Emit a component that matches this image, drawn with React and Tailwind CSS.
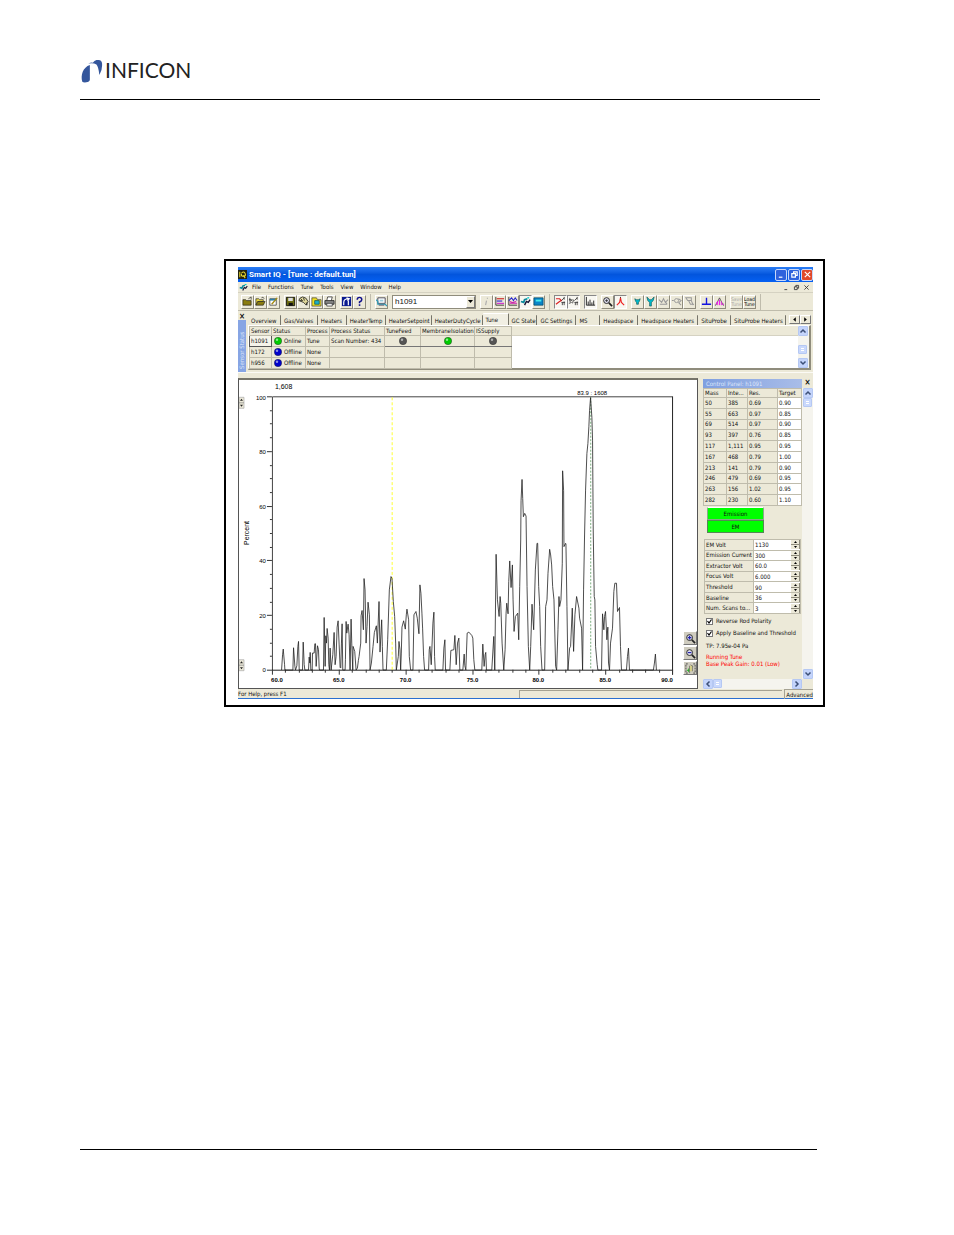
import React from "react";

const trace =
  "155,391 158,345 160,328 164,375 165,391 189,391 191,324 195,380 197,391 201,378 204,320 206,305 208,391 218,391 220,307 223,374 225,391 236,391 238,352 240,370 241,338 243,391 247,391 248,340 253,340 255,312 257,312 259,380 263,318 266,330 268,385 269,391 281,391 283,233 286,380 288,288 290,310 292,266 295,295 297,375 299,391 301,325 304,391 309,345 313,278 316,375 319,350 322,262 325,243 328,313 331,383 333,385 335,310 337,252 339,391 346,391 347,360 349,245 351,280 355,253 358,285 361,391 364,238 366,310 369,391 370,320 375,335 379,391 383,385 386,362 388,350 393,310 394,228 397,212 401,270 403,116 406,150 409,310 412,260 415,187 419,225 421,391 425,370 430,320 434,278 440,258 443,310 448,185 451,337 456,240 458,320 460,391 470,391 474,300 479,150 484,110 487,116 491,185 495,230 498,310 500,391 506,350 508,305 511,330 513,391 515,340 517,262 522,243 527,268 530,225 532,208 537,240 539,350 543,391 550,391 553,225 559,215 563,235 568,282 571,135 574,160 577,220 579,265 582,350 585,391 597,391 599,330 601,320 605,375 610,250 613,217 615,350 617,391 640,391 643,325 646,300 648,391 661,391 664,332 673,330 676,287 680,375 684,310 688,295 691,391 700,391 704,343 706,378 709,391 713,280 718,277 727,287 730,295 733,360 736,391 757,391 760,313 764,380 767,345 769,338 771,391 787,391 793,290 796,391 800,43 804,180 809,230 812,170 814,190 818,310 823,391 827,330 830,220 832,190 836,222 838,125 841,63 845,143 849,75 851,180 854,275 858,230 865,220 868,300 871,140 874,0 875,-118 878,-182 880,-125 882,-70 886,-80 890,-72 893,140 897,320 901,391 904,320 908,193 913,270 918,90 923,10 925,10 928,140 931,200 934,320 938,391 946,391 949,200 953,180 956,100 961,28 964,45 967,75 970,140 974,180 979,380 982,391 986,270 989,170 991,200 995,180 999,70 1000,-208 1003,-148 1004,20 1009,10 1010,12 1013,200 1016,391 1021,325 1024,320 1029,205 1033,335 1037,225 1042,170 1049,205 1051,235 1057,265 1060,391 1063,150 1066,-15 1069,-150 1073,-260 1076,-290 1079,-342 1081,-390 1084,-428 1088,-368 1090,-300 1092,-30 1095,170 1097,180 1099,320 1104,375 1106,391 1117,391 1120,222 1124,270 1126,230 1129,215 1133,300 1136,262 1138,370 1141,391 1144,310 1150,265 1154,155 1157,130 1162,130 1165,215 1171,203 1174,320 1177,391 1192,391 1195,350 1198,325 1201,391 1273,391 1276,370 1279,343 1282,391";

const sensors = [
  ["h1091", "Online", "#0c0", "Tune", "Scan Number: 434"],
  ["h172", "Offline", "#00c", "None", ""],
  ["h956", "Offline", "#00c", "None", ""],
];
const tabs = ["Overview", "Gas/Valves", "Heaters", "HeaterTemp", "HeaterSetpoint", "HeaterDutyCycle", "Tune", "GC State", "GC Settings", "MS", "Headspace", "Headspace Heaters", "SituProbe", "SituProbe Heaters"];
const masses = [
  ["50", "385", "0.69", "0.90"],
  ["55", "663", "0.97", "0.85"],
  ["69", "514", "0.97", "0.90"],
  ["93", "397", "0.76", "0.85"],
  ["117", "1,111", "0.95", "0.95"],
  ["167", "468", "0.79", "1.00"],
  ["213", "141", "0.79", "0.90"],
  ["246", "479", "0.69", "0.95"],
  ["263", "156", "1.02", "0.95"],
  ["282", "230", "0.60", "1.10"],
];
const params = [
  ["EM Volt", "1130"],
  ["Emission Current", "300"],
  ["Extractor Volt", "60.0"],
  ["Focus Volt", "6.000"],
  ["Threshold", "90"],
  ["Baseline", "36"],
  ["Num. Scans to...", "3"],
];

/* Toolbar glyphs on a 12 x 12 grid */
const magnifier = (
  <>
    <circle cx="5" cy="5" r="3.2" fill="#dde" stroke="#222" />
    <path d="M7.5 7.5L11 11" stroke="#222" strokeWidth="1.8" />
  </>
);
const glyphs = {
  folder: <><path d="M1 4h3l1 1h5v5H1z" fill="#8a7c10" stroke="#222" strokeWidth=".7" /><path d="M7 3l3-2v3" fill="none" stroke="#333" strokeWidth=".8" /></>,
  open: <><path d="M1 3h3l1 1h4v2H3L1 10z" fill="#e8d840" stroke="#222" strokeWidth=".7" /><path d="M1 10l2-4h8l-2 4z" fill="#8a7c10" stroke="#222" strokeWidth=".7" /><path d="M7 2q2-2 3 1" fill="none" stroke="#222" strokeWidth=".7" /></>,
  edit: <><path d="M2 3h7v7H2z" fill="#fff" stroke="#333" strokeWidth=".8" /><path d="M2 3h7v2H2z" fill="#2a7fa8" /><path d="M4 9l6-7" stroke="#a58a10" strokeWidth="1.5" /></>,
  save: <><path d="M1.5 1.5h9v9h-9z" fill="#6b6b10" stroke="#111" /><path d="M3.5 2h5v3.5h-5z" fill="#ddd" /><path d="M4 7.5h4.5v3H4z" fill="#111" /></>,
  saveAs: <><path d="M1 5q0-3 4-4 4 0 6 5l-2 4-3-3z" fill="#e0d89a" stroke="#222" strokeWidth=".9" /><path d="M3 3l2 2M6 2l1 3M9 7l1 3M2 5h3" stroke="#222" strokeWidth=".9" /></>,
  picture: <><path d="M1 2h5l1 2h4v7H1z" fill="#f0e020" stroke="#333" strokeWidth=".7" /><path d="M4 5h5v4H4z" fill="#1bb0c8" stroke="#045" strokeWidth=".7" /></>,
  print: <><path d="M3 5l1-4h5L8 5" fill="#fff" stroke="#222" strokeWidth=".8" /><path d="M1 5h10v4H1z" fill="#888" stroke="#111" strokeWidth=".8" /><path d="M3 8h6v3H3z" fill="#eee" stroke="#222" strokeWidth=".7" /></>,
  connect: <><path d="M1 1h10v10H1z" fill="#0a1a90" /><path d="M3 10V7M3 7q0-4 5-4M6 2l3 1-2 2M8 5v5" fill="none" stroke="#fff" strokeWidth="1.300" /></>,
  help: <><path d="M3.5 4q0-2.5 2.5-2.5T8.500 4Q8.500 5.500 6 6.500V8" fill="none" stroke="#10108c" strokeWidth="1.6" /><path d="M5.200 9h1.700v1.800H5.200z" fill="#10108c" /></>,
  device: <><path d="M2 2h8v6H2z" fill="#fff" stroke="#334" strokeWidth=".9" /><path d="M4 4h4v2H4z" fill="#9cd" /><path d="M0 4l2 2v3h8l2 2" fill="none" stroke="#2a9ab8" strokeWidth="1.300" /><path d="M3 10h6" stroke="#335" strokeWidth=".8" /></>,
  info: <path d="M7 2v1M6 5L5 10" stroke="#aaa" strokeWidth="1.2" />,
  plotBars: <><path d="M2 1v9h9" fill="none" stroke="#222" strokeWidth=".9" /><path d="M3 3h8" stroke="#c22" strokeWidth="1.2" /><path d="M3 5.500h6" stroke="#22c" strokeWidth="1.2" /><path d="M3 8h8" stroke="#c2c" strokeWidth="1.2" /></>,
  plotLines: <><path d="M2 1v9h9" fill="none" stroke="#222" strokeWidth=".9" /><path d="M2 5l3-3 2 3 2-3 2 3" fill="none" stroke="#22c" strokeWidth="1.1" /><path d="M3 8h8M3 6l3 1 4-1" fill="none" stroke="#c2a" strokeWidth="1.1" /></>,
  probe: <><path d="M1 6l3 1 1-3 3-1" fill="none" stroke="#0a8a9c" strokeWidth="2" /><path d="M5 10l2-4 2 1 2-3" fill="none" stroke="#113" strokeWidth="1.500" /><path d="M8 2h2" stroke="#0cc" strokeWidth="1.500" /></>,
  screen: <><path d="M1 2h10v8H1z" fill="#0a86c8" stroke="#046" strokeWidth=".8" /><path d="M3 4h6v2H3z" fill="#4ee" /></>,
  traceRed: <><path d="M1 3h4l2 2-2 1-4 3" fill="none" stroke="#d22" strokeWidth="1.3" /><path d="M7 5l3-3M10 1v3M7 7h4M8 7v3M10 6v4" stroke="#333" strokeWidth=".9" /></>,
  traceBlack: <><path d="M1 4h3M2 2v4l3-2M1 8l3-1M7 5l3-3M10 1v3M7 7h4M8 7v3M10 6v4M5 8l1-4" fill="none" stroke="#333" strokeWidth=".9" /></>,
  spectrum: <path d="M1.500 1v9H11M3.500 10V6M5.500 10V4M7.500 10V7M9.500 10V5" fill="none" stroke="#222" strokeWidth="1" />,
  zoomPlus: <>{magnifier}<path d="M3.500 5h3M5 3.500v3" stroke="#222" strokeWidth=".8" /></>,
  peak: <><path d="M6 1v4" stroke="#222" /><path d="M2 10l3-3 1-5 1 5 3 3" fill="none" stroke="#e22" strokeWidth="1.2" /></>,
  filterSmall: <path d="M3 3l2 1h2l2-1-1 3-1 1v2H5V7L4 6z" fill="#0bc" stroke="#044" strokeWidth=".6" />,
  filterBig: <path d="M2 1l1 4 2 2v4h2V7l2-2 1-4-3 3H5z" fill="#0bc" stroke="#044" strokeWidth=".6" />,
  grayA: <path d="M1 4l3 3 2-4 2 4 3-3M2 9h8M7 5l3 4" fill="none" stroke="#999" strokeWidth="1.100" />,
  grayB: <><circle cx="6" cy="5" r="2.200" fill="none" stroke="#999" /><path d="M1 5h2M8 7l3 3M8 3l3 2-2 2" fill="none" stroke="#999" strokeWidth="1.1" /></>,
  grayC: <path d="M2 2h6v3H4zM5 5l2 4h4M8 5l2 5" fill="none" stroke="#999" strokeWidth="1.1" />,
  base: <path d="M1 9h10M6 9V2" stroke="#1414e0" strokeWidth="1.500" />,
  peaks: <><path d="M1 10h1l4-8 4 8h1" fill="none" stroke="#222" strokeWidth=".7" /><path d="M2 9l2-3v4M6 4v6M8 6v4M10 8v2" fill="none" stroke="#e1e" strokeWidth="1" /></>,
};

function Tool({ name, down }) {
  return (
    <button
      type="button"
      aria-label={name}
      className={
        "flex h-[14px] w-[13px] shrink-0 items-center justify-center border " +
        (down ? "border-t-[#888] border-l-[#888] border-r-white border-b-white bg-[#f8f7f1]" : "border-t-white border-l-white border-r-[#8f8c7c] border-b-[#8f8c7c]")
      }
    >
      <svg viewBox="0 0 12 12" className="size-[11px] shrink-0">{glyphs[name]}</svg>
    </button>
  );
}

function TextTool({ a, b, dim }) {
  return (
    <button type="button" className={"flex h-[14px] w-[13px] shrink-0 flex-col items-center justify-center border border-t-white border-l-white border-r-[#8f8c7c] border-b-[#8f8c7c] text-[5px] leading-[5px] " + (dim ? "text-[#aaa]" : "text-black")}>
      <span>{a}</span>
      <span>{b}</span>
    </button>
  );
}

const Group = ({ children }) => <div className="flex shrink-0">{children}</div>;

function ScrollButton({ d, label }) {
  return (
    <button type="button" aria-label={label} className="flex size-[10px] shrink-0 items-center justify-center rounded-[1px] border border-[#b5c8f3] bg-[#c4d4fb]">
      <svg viewBox="0 0 8 8" className="size-[8px] shrink-0"><path d={d} fill="none" stroke="#3c4f77" strokeWidth="1.500" /></svg>
    </button>
  );
}
const UP = "M1.500 5.500L4 3l2.500 2.500";
const DOWN = "M1.500 2.500L4 5l2.500-2.500";
const LEFT = "M5.500 1.500L3 4l2.500 2.500";
const RIGHT = "M2.500 1.500L5 4l-2.500 2.500";
const Thumb = () => <div className="size-[9px] shrink-0 rounded-[1px] border border-[#b5c8f3] bg-[#c9d8fc] p-[2px]"><div className="h-full border-y border-white" /></div>;

const Led = ({ c, className = "" }) => (
  <svg viewBox="0 0 8 8" className={"inline-block size-[8px] shrink-0 " + className}>
    <circle cx="4" cy="4" r="3.700" fill={c} stroke="#222" strokeWidth=".4" />
    <circle cx="3" cy="2.700" r="1.200" fill="#fff" opacity=".55" />
  </svg>
);

function SensorDock() {
  return (
    <section className="flex h-[62px] border-b border-[#fbfaf5] pt-[2px]">
      <div className="flex w-[8px] shrink-0 flex-col items-center">
        <button type="button" aria-label="Close sensor status" className="h-[7px] text-[8px] leading-[6px] font-bold">×</button>
        <div className="flex w-[8px] flex-1 rotate-180 items-center justify-start bg-[#87a5e4] pt-[3px] text-[6px] leading-[8px] whitespace-nowrap text-[#dce6fa] [writing-mode:vertical-rl]">Sensor Status</div>
      </div>
      <div className="mr-[2px] ml-[2px] flex min-w-0 flex-1 flex-col pb-[2px]">
        <div className="flex h-[12px]">
          <div role="tablist" className="grid min-w-0 flex-1 grid-cols-[33fr_37fr_29fr_39fr_46fr_51fr_26fr_29fr_39fr_24fr_38fr_60fr_33fr_55fr] items-end">
            {tabs.map((t) => (
              <button
                key={t}
                type="button"
                role="tab"
                aria-selected={t === "Tune"}
                className={
                  "min-w-0 rounded-t-[1px] border-r border-[#77756a] pl-[3px] text-left leading-[9px] whitespace-nowrap " +
                  (t === "Tune" ? "h-[12px] border-t border-t-white bg-[#f1efe3]" : "h-[10px]")
                }
              >
                {t}
              </button>
            ))}
          </div>
          <div className="flex w-[25px] shrink-0 items-center justify-end">
            {["M5.500 1.500v5L2.500 4z", "M2.500 1.500v5L5.500 4z"].map((d, i) => (
              <button key={d} type="button" aria-label={i ? "Next tabs" : "Previous tabs"} className="flex h-[9px] w-[11px] items-center justify-center border border-t-white border-l-white border-r-[#777] border-b-[#777]">
                <svg viewBox="0 0 8 8" className="size-[7px]"><path d={d} /></svg>
              </button>
            ))}
          </div>
        </div>
        <div className="flex min-h-0 flex-1 border-t border-r-2 border-b-2 border-l border-t-white border-r-[#8f8c7c] border-b-[#8f8c7c] border-l-white">
          <div className="flex min-w-0 flex-1 bg-white">
            <table className="h-[43px] w-[262px] shrink-0 table-fixed border-collapse bg-[#ece9d8] leading-[8px] whitespace-nowrap">
              <colgroup>
                <col className="w-[22px]" /><col className="w-[34px]" /><col className="w-[24px]" /><col className="w-[55px]" /><col className="w-[36px]" /><col className="w-[54px]" /><col className="w-[37px]" />
              </colgroup>
              <thead>
                <tr>
                  {["Sensor", "Status", "Process", "Process Status", "TuneFeed", "MembraneIsolation", "ISSupply"].map((h) => (
                    <th key={h} className="border border-[#bfbcac] p-0 pl-px text-left font-normal">{h}</th>
                  ))}
                </tr>
              </thead>
              <tbody>
                {sensors.map(([name, st, c, proc, ps], i) => (
                  <tr key={name}>
                    <td className={"border p-0 pl-px " + (i ? "border-[#bfbcac]" : "border-[#555] bg-[#f6f4ea]")}>{name}</td>
                    <td className="border border-[#bfbcac] p-0 pl-[2px]"><span className="flex items-center gap-[2px]"><Led c={c} />{st}</span></td>
                    <td className="border border-[#bfbcac] p-0 pl-px">{proc}</td>
                    <td className="border border-[#bfbcac] p-0 pl-px">{ps}</td>
                    {["#555", "#0c0", "#555"].map((k, j) => (
                      <td key={j} className={"border border-[#bfbcac] p-0 text-center " + (i ? "" : "border-b-[#777]")}>{i === 0 && <Led c={k} className="align-top" />}</td>
                    ))}
                  </tr>
                ))}
              </tbody>
            </table>
            <div className="h-[10px] flex-1 border-b border-[#d5d2c2] bg-[#ece9d8]" />
          </div>
          <div className="flex w-[11px] shrink-0 flex-col bg-[#f5f4ee]">
            <ScrollButton d={UP} label="Scroll up" />
            <div className="flex-1" />
            <Thumb />
            <div className="h-[4px]" />
            <ScrollButton d={DOWN} label="Scroll down" />
          </div>
        </div>
      </div>
    </section>
  );
}

function Chart() {
  const xt = Array.from({ length: 31 }, (_, i) => i);
  const yt = Array.from({ length: 21 }, (_, i) => i);
  return (
    <div className="relative min-w-0 flex-1 border-t-2 border-r border-b border-l border-[#555] border-t-[#77756a] bg-white">
      <svg viewBox="0 0 459 308" className="block h-full w-full" fontFamily="Liberation Sans, Arial, sans-serif" fontSize="6">
        <path d="M33.500 290.500V16.500H434" fill="none" stroke="#444" />
        <path d="M434.500 16V295M33 290.500H435" fill="none" stroke="#222" />
        {xt.map((i) => (
          <path key={i} d={`M${33.5 + Math.round(i * 13.37)} 290v${i % 5 ? 3 : 5}`} stroke="#333" />
        ))}
        {yt.map((i) => (
          <path key={i} d={`M33 ${16.5 + Math.round(i * 13.7)}h${i % 4 ? -2 : -5}`} stroke="#333" />
        ))}
        {["100", "80", "60", "40", "20", "0"].map((t, i) => (
          <text key={t} x="27" y={20 + Math.round(i * 54.4)} textAnchor="end">{t}</text>
        ))}
        {[["60.0", 38], ["65.0", 100], ["70.0", 167], ["75.0", 234], ["80.0", 300], ["85.0", 367], ["90.0", 429]].map(([t, x]) => (
          <text key={t} x={x} y="302" textAnchor="middle" fontWeight="bold">{t}</text>
        ))}
        <path d="M153.500 17V290" stroke="#ff3" strokeDasharray="3 2" />
        <path d="M352.500 17V290" stroke="#5b9a5f" strokeDasharray="2 1.500" strokeWidth=".8" />
        <polyline points={trace} transform="translate(-9 160) scale(.33333)" fill="none" stroke="#222" strokeWidth="2.400" />
        <text x="36" y="9" fontSize="7">1,608</text>
        <text x="339" y="15">83.9 : 1608</text>
        <text transform="translate(10 165) rotate(-90)" fontSize="7">Percent</text>
        {[17, 280].map((y) => (
          <g key={y}>
            <path d={`M0 ${y}h5v11h-5z`} fill="#ece9d8" stroke="#aaa" strokeWidth=".700" />
            <path d={`M0 ${y + 5.5}h5`} stroke="#888" strokeWidth=".700" />
            <path d={`M1 ${y + 3.5}h3l-1.500-2zM1 ${y + 7.5}h3l-1.500 2z`} fill="#222" />
          </g>
        ))}
      </svg>
      <div className="absolute right-0 bottom-[13px] flex flex-col gap-px">
        {[
          ["Zoom in", <g key="i">{magnifier}<path d="M3 5h4M5 3v4" stroke="#22a" strokeWidth="1.200" /></g>],
          ["Zoom out", <g key="o">{magnifier}<path d="M3 5h4" stroke="#22a" strokeWidth="1.200" /></g>],
          ["Fit", <g key="f"><path d="M3 1H1v10h2M9 1h2v10H9" fill="none" stroke="#444" strokeDasharray="2 1" /><path d="M2 8h3M4 6v4" fill="none" stroke="#2a2" /><path d="M5 3v8M8 3v6M6 2l3 2" stroke="#776" /><path d="M6 3h1v6H6z" fill="#e6dc50" /></g>],
        ].map(([l, g]) => (
          <button key={l} type="button" aria-label={l} className="flex size-[14px] items-center justify-center border border-t-white border-r-[#777] border-b-[#777] border-l-white bg-[#cfccbf]">
            <svg viewBox="0 0 12 12" className="size-[11px] shrink-0">{g}</svg>
          </button>
        ))}
      </div>
    </div>
  );
}

function ControlPanel() {
  return (
    <aside className="flex w-[111px] shrink-0 flex-col pl-px leading-[8px] whitespace-nowrap">
      <div className="flex h-[10px] items-center">
        <h2 className="h-[9px] flex-1 bg-gradient-to-r from-[#7f9fe0] to-[#a9bde8] pl-[3px] leading-[9px] text-[#dce6fa]">Control Panel: h1091</h2>
        <button type="button" aria-label="Close control panel" className="w-[11px] text-[8px] leading-[8px] font-bold">×</button>
      </div>
      <div className="flex min-h-0 flex-1">
        <div className="flex min-w-0 flex-1 flex-col">
          <table className="h-[118px] w-full table-fixed border-collapse">
            <colgroup><col className="w-[23px]" /><col className="w-[21px]" /><col className="w-[30px]" /><col /></colgroup>
            <thead>
              <tr>{["Mass", "Inte...", "Res.", "Target"].map((h) => <th key={h} className="border border-[#bfbcac] p-0 pl-px text-left font-normal">{h}</th>)}</tr>
            </thead>
            <tbody>
              {masses.map((r) => (
                <tr key={r[0]}>{r.map((v, j) => <td key={j} className={"border border-[#bfbcac] p-0 pl-px " + (j === 3 ? "bg-white" : "")}>{v}</td>)}</tr>
              ))}
            </tbody>
          </table>
          <div className="mt-px ml-1 flex w-[57px] flex-col">
            <button type="button" className="h-[13px] border border-[#8a8] border-t-white bg-[#0f0]">Emission</button>
            <button type="button" className="h-[13px] border border-[#585] bg-[#0f0]">EM</button>
          </div>
          <table className="mt-[6px] ml-px h-[75px] w-[97px] table-fixed border-collapse border border-[#8f8c7c]">
            <colgroup><col className="w-[49px]" /><col /></colgroup>
            <tbody>
              {params.map(([l, v], i) => (
                <tr key={l}>
                  <th className="border border-[#bfbcac] p-0 pl-px text-left font-normal"><label htmlFor={`p${i}`}>{l}</label></th>
                  <td className="border border-[#bfbcac] bg-white p-0">
                    <div className="flex items-center">
                      <input id={`p${i}`} defaultValue={v} className="h-[9px] w-0 min-w-0 flex-1 bg-transparent pl-px" />
                      <div className="flex w-[9px] shrink-0 flex-col bg-[#ece9d8]">
                        <button type="button" aria-label={`Increase ${l}`} className="flex h-[5px] items-center justify-center border-r border-b border-[#8f8c7c]"><svg viewBox="0 0 3 2" className="h-[2px] w-[3px]"><path d="M0 2h3L1.500 0z" /></svg></button>
                        <button type="button" aria-label={`Decrease ${l}`} className="flex h-[4px] items-center justify-center border-r border-[#8f8c7c]"><svg viewBox="0 0 3 2" className="h-[2px] w-[3px]"><path d="M0 0h3L1.500 2z" /></svg></button>
                      </div>
                    </div>
                  </td>
                </tr>
              ))}
            </tbody>
          </table>
          <div className="mt-[3px] flex flex-col gap-1 pl-[3px]">
            {["Reverse Rod Polarity", "Apply Baseline and Threshold"].map((t) => (
              <label key={t} className="flex items-center gap-[3px]">
                <span className="grid size-[7px] shrink-0">
                  <input type="checkbox" defaultChecked className="peer col-start-1 row-start-1 size-[7px] appearance-none border border-[#777] bg-white" />
                  <svg viewBox="0 0 7 7" className="pointer-events-none col-start-1 row-start-1 hidden size-[7px] peer-checked:block"><path d="M1.500 3l1.500 2 2.500-3.500" fill="none" stroke="#000" strokeWidth="1.200" /></svg>
                </span>
                {t}
              </label>
            ))}
          </div>
          <p className="mt-[5px] pl-[3px]">TP: 7.95e-04 Pa</p>
          <p className="mt-[3px] pl-[3px] leading-[7px] text-[#f00]">Running Tune<br />Base Peak Gain: 0.01 (Low)</p>
          <div className="mt-auto flex h-[10px] bg-[#f5f4ee]">
            <ScrollButton d={LEFT} label="Scroll left" />
            <Thumb />
            <div className="flex-1" />
            <ScrollButton d={RIGHT} label="Scroll right" />
          </div>
        </div>
        <div className="mb-[10px] flex w-[11px] shrink-0 flex-col items-center bg-[#f5f4ee]">
          <ScrollButton d={UP} label="Scroll up" />
          <Thumb />
          <div className="flex-1" />
          <ScrollButton d={DOWN} label="Scroll down" />
        </div>
      </div>
    </aside>
  );
}

function AppWindow() {
  return (
    <div className="bg-[#ece9d8] font-['DejaVu_Sans_Condensed','Liberation_Sans',sans-serif] text-[6px] leading-[8px] text-[#111]">
      <header className="flex h-[15px] items-center gap-[2px] bg-gradient-to-b from-[#2a7df5] via-[#0355dd] to-[#0560f2]">
        <svg viewBox="0 0 10 10" className="size-[9px]"><path d="M0 0h10v10H0z" fill="#221" /><path d="M2 2v6M4 3q3-2 4 1t-2 3-2-3M6 6l2 3" fill="none" stroke="#e8d830" strokeWidth="1.200" /></svg>
        <h1 className="flex-1 font-['Roboto','Liberation_Sans',sans-serif] text-[8px] leading-[10px] font-bold text-white">Smart IQ - [Tune : default.tun]</h1>
        <div className="flex gap-px">
          {[
            ["Minimize", "M2 8h4", false],
            ["Restore", "M4 4V2h4v4H6M2 4h4v4H2z", false],
            ["Close", "M2 2l6 6M8 2L2 8", true],
          ].map(([l, d, red]) => (
            <button key={l} type="button" aria-label={l} className={"flex size-[12px] items-center justify-center rounded-[2px] border border-[#c8d8fa] " + (red ? "bg-[#e0492a]" : "bg-[#2f62dd]")}>
              <svg viewBox="0 0 10 10" className="size-[9px] shrink-0"><path d={d} fill="none" stroke="#fff" strokeWidth="1.300" /></svg>
            </button>
          ))}
        </div>
      </header>
      <nav className="flex h-[11px] items-center border-b border-[#d5d2c2] pl-px">
        <svg viewBox="0 0 12 12" className="mr-[4px] size-[9px]">{glyphs.probe}</svg>
        <div className="flex flex-1 gap-[7px]">
          {["File", "Functions", "Tune", "Tools", "View", "Window", "Help"].map((m) => <button key={m} type="button">{m}</button>)}
        </div>
        {["M2 8h4", "M4 4V2h4v4H6M2 4h4v4H2z", "M2 2l6 6M8 2L2 8"].map((d, i) => (
          <button key={d} type="button" aria-label={["Minimize document", "Restore document", "Close document"][i]} className="w-[10px]"><svg viewBox="0 0 10 10" className="size-[7px]"><path d={d} fill="none" stroke="#333" strokeWidth="1.200" /></svg></button>
        ))}
      </nav>
      <div className="flex h-[18px] items-center gap-1 overflow-hidden border-b border-[#bfbcac] pl-[3px]">
        <Group><Tool name="folder" /><Tool name="open" /><Tool name="edit" /></Group>
        <Group><Tool name="save" /><Tool name="saveAs" /><Tool name="picture" /><Tool name="print" /></Group>
        <Group><Tool name="connect" /><Tool name="help" /></Group>
        <div className="h-[16px] w-px shrink-0 bg-[#bfbcac]" />
        <Group><Tool name="device" /></Group>
        <div className="grid w-[84px] shrink-0 items-center">
          <select aria-label="Sensor" className="col-start-1 row-start-1 h-[14px] w-full appearance-none border border-[#8f8c7c] bg-white pl-[2px] font-['Liberation_Sans',sans-serif] text-[8px] leading-[10px]">
            <option>h1091</option>
          </select>
          <span className="pointer-events-none col-start-1 row-start-1 mr-px flex h-[12px] w-[9px] items-center justify-center justify-self-end border border-t-white border-r-[#777] border-b-[#777] border-l-white bg-[#ece9d8]">
            <svg viewBox="0 0 5 3" className="h-[3px] w-[5px]"><path d="M0 0h5L2.500 3z" /></svg>
          </span>
        </div>
        <Group><Tool name="info" /><Tool name="plotBars" /><Tool name="plotLines" /><Tool name="probe" down /><Tool name="screen" /></Group>
        <div className="h-[16px] w-px shrink-0 bg-[#bfbcac]" />
        <Group><Tool name="traceRed" down /><Tool name="traceBlack" down /></Group>
        <Group><Tool name="spectrum" down /></Group>
        <Group><Tool name="zoomPlus" /><Tool name="peak" down /></Group>
        <Group><Tool name="filterSmall" /><Tool name="filterBig" /><Tool name="grayA" /><Tool name="grayB" /><Tool name="grayC" /></Group>
        <Group><Tool name="base" /><Tool name="peaks" /></Group>
        <Group><TextTool a="Save" b="Tune" dim /><TextTool a="Load" b="Tune" /></Group>
        <div className="h-[16px] w-px shrink-0 bg-[#bfbcac]" />
      </div>
      <SensorDock />
      <div className="mt-[5px] flex h-[311px] gap-1">
        <Chart />
        <ControlPanel />
      </div>
      <footer className="flex h-[10px] items-center border-b border-[#2a6fd0] leading-[9px]">
        <span className="w-[281px]">For Help, press F1</span>
        <span className="h-[8px] flex-1 border-t border-l border-[#a5a293]" />
        <span className="ml-[2px] border-t border-l border-[#a5a293] pl-px">Advanced</span>
      </footer>
    </div>
  );
}

export default function App() {
  return (
    <main className="min-h-screen bg-white pr-[134px] pl-20">
      <div className="flex h-[100px] items-end border-b border-black pb-[16px]">
        <svg viewBox="0 0 68 70" className="mr-[2px] h-[23px] w-[23px]">
          <path d="M6 66C0 46 8 22 29 15V60Q28 67 18 68Q9 69 6 66Z" fill="#34569c" />
          <path d="M24 11Q34 6 38 8Q45-2 56 0Q64 0 66 9Q68 30 58 46Q55 20 49 14Q40 8 24 11Z" fill="#34569c" />
        </svg>
        <span className="font-['Lato','Liberation_Sans',sans-serif] text-[21px] leading-[26px] text-[#222]">INFICON</span>
      </div>
      <figure className="mt-[159px] -mr-[5px] ml-36 border-2 border-black pt-[6px] pr-[10px] pb-[6px] pl-3">
        <AppWindow />
      </figure>
      <div className="mt-[442px] mr-[3px] border-t border-black" />
    </main>
  );
}
